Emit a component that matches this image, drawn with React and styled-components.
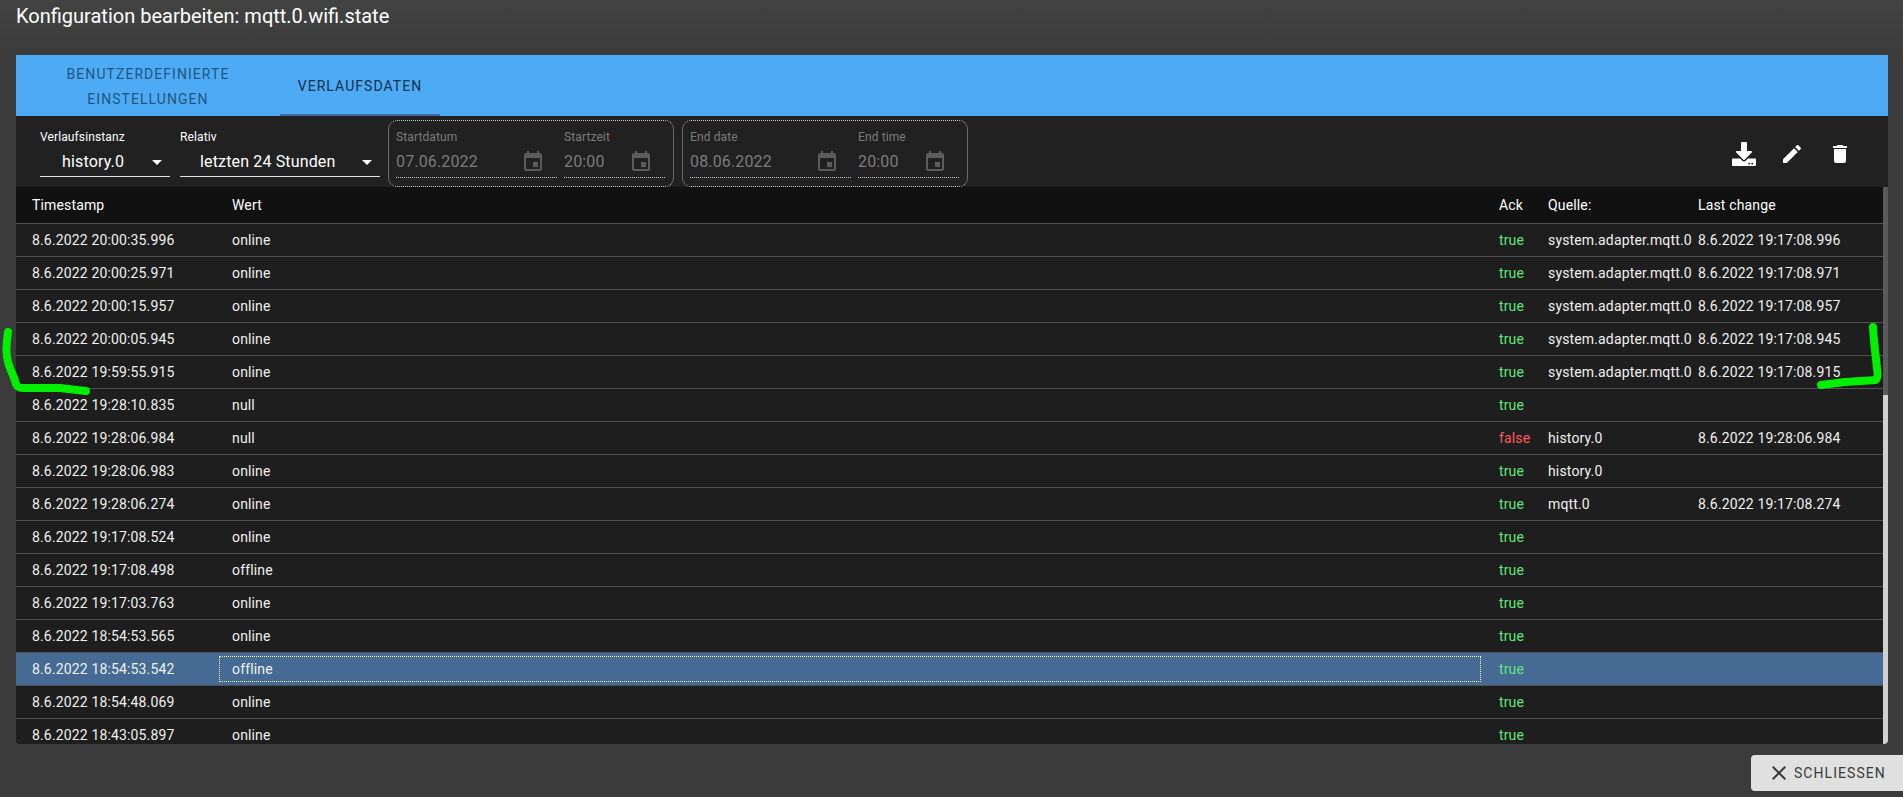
import styled, { createGlobalStyle } from "styled-components";
import { FaDownload } from "react-icons/fa";

const rows = [
  ["8.6.2022 20:00:35.996", "online", "true", "system.adapter.mqtt.0", "8.6.2022 19:17:08.996"],
  ["8.6.2022 20:00:25.971", "online", "true", "system.adapter.mqtt.0", "8.6.2022 19:17:08.971"],
  ["8.6.2022 20:00:15.957", "online", "true", "system.adapter.mqtt.0", "8.6.2022 19:17:08.957"],
  ["8.6.2022 20:00:05.945", "online", "true", "system.adapter.mqtt.0", "8.6.2022 19:17:08.945"],
  ["8.6.2022 19:59:55.915", "online", "true", "system.adapter.mqtt.0", "8.6.2022 19:17:08.915"],
  ["8.6.2022 19:28:10.835", "null", "true", "", ""],
  ["8.6.2022 19:28:06.984", "null", "false", "history.0", "8.6.2022 19:28:06.984"],
  ["8.6.2022 19:28:06.983", "online", "true", "history.0", ""],
  ["8.6.2022 19:28:06.274", "online", "true", "mqtt.0", "8.6.2022 19:17:08.274"],
  ["8.6.2022 19:17:08.524", "online", "true", "", ""],
  ["8.6.2022 19:17:08.498", "offline", "true", "", ""],
  ["8.6.2022 19:17:03.763", "online", "true", "", ""],
  ["8.6.2022 18:54:53.565", "online", "true", "", ""],
  ["8.6.2022 18:54:53.542", "offline", "true", "", ""],
  ["8.6.2022 18:54:48.069", "online", "true", "", ""],
  ["8.6.2022 18:43:05.897", "online", "true", "", ""],
];

const SELECTED = 13;

const GlobalStyle = createGlobalStyle`
  html, body {
    margin: 0;
    height: 100%;
    overflow: hidden;
    background: #3b3b3b;
    font-family: Roboto, "Liberation Sans", sans-serif;
  }
`;

const Dialog = styled.div`
  position: relative;
  width: 1903px;
  height: 797px;
  display: flex;
  flex-direction: column;
  background: linear-gradient(#424242, #3b3b3b 60px);
  overflow: hidden;
`;

const Title = styled.h2`
  margin: 0;
  height: 55px;
  box-sizing: border-box;
  padding: 3px 0 0 16px;
  font-size: 20px;
  line-height: 26px;
  font-weight: 400;
  color: #fff;
`;

const Panel = styled.div`
  margin: 0 15px 0 16px;
  height: 689px;
  display: flex;
  flex-direction: column;
  border-radius: 0 0 4px 4px;
  background: #1e1e1e;
  overflow: hidden;
`;

const TabBar = styled.div`
  height: 61px;
  flex: none;
  display: flex;
  background: #4dabf5;
`;

const Tab = styled.div`
  width: ${(p) => p.$width}px;
  box-sizing: border-box;
  padding: 4px 12px 0;
  display: flex;
  align-items: center;
  justify-content: center;
  text-align: center;
  font-size: 14px;
  line-height: 25px;
  font-weight: 400;
  letter-spacing: 0.075em;
  text-transform: uppercase;
  color: #12304a;
  opacity: ${(p) => (p.$active ? 1 : 0.7)};
  border-bottom: 2px solid ${(p) => (p.$active ? "#3f6b99" : "transparent")};
`;

const Toolbar = styled.div`
  height: 71px;
  flex: none;
  box-sizing: border-box;
  padding: 4px 0 0 24px;
  display: flex;
  align-items: flex-start;
  background: #212121;
`;

const SelectField = styled.div`
  width: ${(p) => p.$width}px;
  margin-right: ${(p) => p.$gap}px;
  height: 57px;
  box-sizing: border-box;
  padding-top: 10px;
  border-bottom: 1px solid #e4e4e4;
  color: #fff;
`;

const FieldLabel = styled.div`
  font-size: 12px;
  line-height: 14px;
  letter-spacing: 0.00938em;
  color: ${(p) => (p.$muted ? "#7c7c7c" : "#fff")};
`;

const SelectValue = styled.div`
  margin-top: 6px;
  display: flex;
  align-items: center;
  padding-left: ${(p) => p.$indent}px;
  font-size: 16px;
  line-height: 24px;
  letter-spacing: 0.00938em;
`;

const Arrow = styled.span`
  margin-left: auto;
  margin-right: 8px;
  width: 0;
  height: 0;
  border-left: 5px solid transparent;
  border-right: 5px solid transparent;
  border-top: 5px solid #fff;
`;

const DateGroup = styled.div`
  width: 286px;
  height: 67px;
  box-sizing: border-box;
  margin-right: 8px;
  padding: 0 7px;
  display: flex;
  gap: 7px;
  border: 1px solid #6a6a6a;
  border-top: 1px dotted #cfcfcf;
  border-bottom: 1px dotted #cfcfcf;
  border-radius: 9px;
`;

const DateField = styled.div`
  width: ${(p) => p.$width}px;
  height: 57px;
  box-sizing: border-box;
  padding-top: 9px;
  border-bottom: 1px dotted #cfcfcf;
`;

const DateValue = styled.div`
  margin-top: 6px;
  display: flex;
  align-items: center;
  justify-content: space-between;
  padding-right: ${(p) => p.$pad}px;
  font-size: 16px;
  line-height: 24px;
  letter-spacing: 0.00938em;
  color: #7c7c7c;
`;

const Actions = styled.div`
  margin-left: auto;
  margin-right: 36px;
  padding-top: 22px;
  display: flex;
  gap: 24px;
  color: #fff;
`;

const Header = styled.div`
  height: 37px;
  flex: none;
  box-sizing: border-box;
  display: grid;
  grid-template-columns: 203px 1262px 67px 150px 1fr;
  align-items: center;
  background: #111;
  border-bottom: 1px solid #515151;
  font-size: 14px;
  letter-spacing: 0.01071em;
  color: #fff;
`;

const Row = styled.div`
  height: 33px;
  flex: none;
  box-sizing: border-box;
  display: grid;
  grid-template-columns: 203px 1262px 67px 150px 1fr;
  align-items: center;
  background: ${(p) => (p.$selected ? "#456a94" : "#1e1e1e")};
  border-bottom: 1px solid #515151;
  font-size: 14px;
  letter-spacing: 0.01071em;
  color: #f0f0f0;
`;

const Cell = styled.div`
  padding-left: ${(p) => p.$pad || 0}px;
  white-space: nowrap;
  line-height: 26px;
  color: ${(p) => p.$color || "inherit"};
  ${(p) => p.$focus && "outline: 1px dotted #fff; outline-offset: -1px;"}
`;

const Body = styled.div`
  flex: 1;
  min-height: 0;
  display: flex;
`;

const Table = styled.div`
  flex: 1;
  min-width: 0;
  display: flex;
  flex-direction: column;
  overflow: hidden;
`;

const Scrollbar = styled.div`
  width: 5px;
  flex: none;
  background: #d0d0d0;
`;

const ScrollThumb = styled.div`
  height: 208px;
  background: #5a5a5a;
`;

const Footer = styled.div`
  flex: 1;
  display: flex;
  justify-content: flex-end;
  align-items: flex-start;
  padding: 11px 0 0 0;
`;

const CloseButton = styled.button`
  width: 152px;
  height: 36px;
  box-sizing: border-box;
  border: none;
  border-radius: 4px 0 0 4px;
  padding: 0 0 0 16px;
  display: flex;
  align-items: center;
  gap: 3px;
  background: #e0e0e0;
  color: #3a3a3a;
  font-family: inherit;
  font-size: 14px;
  font-weight: 400;
  letter-spacing: 0.075em;
  text-transform: uppercase;
`;

const Marker = styled.svg`
  position: absolute;
  left: 0;
  top: 0;
  pointer-events: none;
`;

const CalendarIcon = () => (
  <svg width="24" height="24" viewBox="0 0 24 24" fill="#5c5c5c">
    <path d="M17 12h-5v5h5v-5zM16 1v2H8V1H6v2H5c-1.11 0-1.99.9-1.99 2L3 19c0 1.1.89 2 2 2h14c1.1 0 2-.9 2-2V5c0-1.1-.9-2-2-2h-1V1h-2zm3 18H5V8h14v11z" />
  </svg>
);

const EditIcon = () => (
  <svg width="24" height="24" viewBox="0 0 24 24" fill="currentColor">
    <path d="M3 17.25V21h3.75L17.81 9.94l-3.75-3.75L3 17.25zM20.71 7.04c.39-.39.39-1.02 0-1.41l-2.34-2.34a.9959.9959 0 0 0-1.41 0l-1.83 1.83 3.75 3.75 1.83-1.83z" />
  </svg>
);

const DeleteIcon = () => (
  <svg width="24" height="24" viewBox="0 0 24 24" fill="currentColor">
    <path d="M6 19c0 1.1.9 2 2 2h8c1.1 0 2-.9 2-2V7H6v12zM19 4h-3.5l-1-1h-5l-1 1H5v2h14V4z" />
  </svg>
);

const CloseIcon = () => (
  <svg width="24" height="24" viewBox="0 0 24 24" fill="currentColor">
    <path d="M19 6.41 17.59 5 12 10.59 6.41 5 5 6.41 10.59 12 5 17.59 6.41 19 12 13.41 17.59 19 19 17.59 13.41 12z" />
  </svg>
);

const DateRange = ({ dateLabel, dateValue, timeLabel, timeValue }) => (
  <DateGroup>
    <DateField $width={161}>
      <FieldLabel $muted>{dateLabel}</FieldLabel>
      <DateValue $pad={12}>
        {dateValue}
        <CalendarIcon />
      </DateValue>
    </DateField>
    <DateField $width={101}>
      <FieldLabel $muted>{timeLabel}</FieldLabel>
      <DateValue $pad={12}>
        {timeValue}
        <CalendarIcon />
      </DateValue>
    </DateField>
  </DateGroup>
);

const App = () => (
  <Dialog>
    <GlobalStyle />
    <Title>Konfiguration bearbeiten: mqtt.0.wifi.state</Title>
    <Panel>
      <TabBar>
        <Tab $width={264}>
          Benutzerdefinierte
          <br />
          Einstellungen
        </Tab>
        <Tab $width={160} $active>
          Verlaufsdaten
        </Tab>
      </TabBar>
      <Toolbar>
        <SelectField $width={130} $gap={10}>
          <FieldLabel>Verlaufsinstanz</FieldLabel>
          <SelectValue $indent={22}>
            history.0
            <Arrow />
          </SelectValue>
        </SelectField>
        <SelectField $width={200} $gap={8}>
          <FieldLabel>Relativ</FieldLabel>
          <SelectValue $indent={20}>
            letzten 24 Stunden
            <Arrow />
          </SelectValue>
        </SelectField>
        <DateRange dateLabel="Startdatum" dateValue="07.06.2022" timeLabel="Startzeit" timeValue="20:00" />
        <DateRange dateLabel="End date" dateValue="08.06.2022" timeLabel="End time" timeValue="20:00" />
        <Actions>
          <FaDownload size={24} />
          <EditIcon />
          <DeleteIcon />
        </Actions>
      </Toolbar>
      <Body>
        <Table>
          <Header>
            <Cell $pad={16}>Timestamp</Cell>
            <Cell $pad={13}>Wert</Cell>
            <Cell $pad={18}>Ack</Cell>
            <Cell>Quelle:</Cell>
            <Cell>Last change</Cell>
          </Header>
          {rows.map((row, i) => (
            <Row key={row[0]} $selected={i === SELECTED}>
              <Cell $pad={16}>{row[0]}</Cell>
              <Cell $pad={13} $focus={i === SELECTED}>
                {row[1]}
              </Cell>
              <Cell $pad={18} $color={row[2] === "true" ? "#5fe87c" : "#ff5a5a"}>
                {row[2]}
              </Cell>
              <Cell>{row[3]}</Cell>
              <Cell>{row[4]}</Cell>
            </Row>
          ))}
        </Table>
        <Scrollbar>
          <ScrollThumb />
        </Scrollbar>
      </Body>
    </Panel>
    <Footer>
      <CloseButton>
        <CloseIcon />
        Schliessen
      </CloseButton>
    </Footer>
    {/* green marks drawn by hand over the screenshot */}
    <Marker width="1903" height="797" fill="none" stroke="#00f000" strokeWidth="8" strokeLinecap="round" strokeLinejoin="round">
      <path d="M8 332C6 345 6 355 8 362C10 370 14 376 15 381C16 386 18 388 22 388L60 388L86 391" />
      <path d="M1873 327C1874 345 1876 358 1877 368C1878 374 1878 378 1876 380L1845 382L1821 385" />
    </Marker>
  </Dialog>
);

export default App;
